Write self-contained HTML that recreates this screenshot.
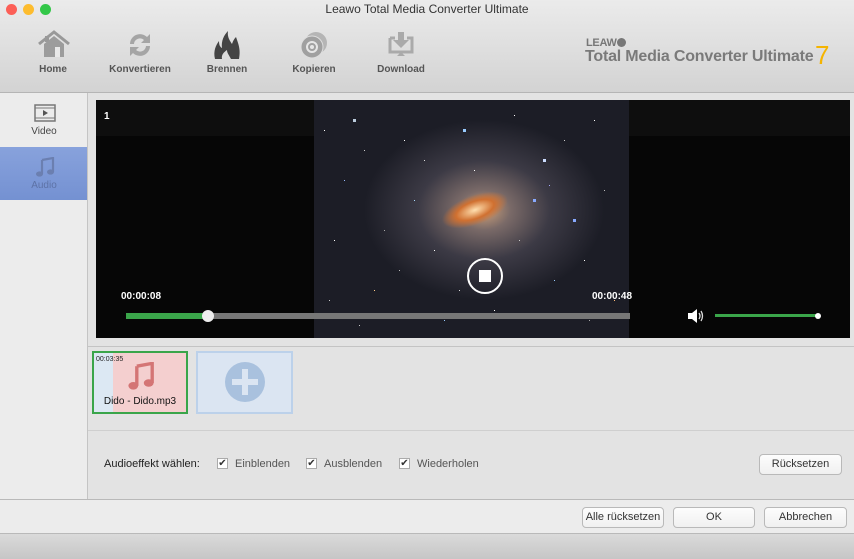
<!DOCTYPE html>
<html><head><meta charset="utf-8"><style>
*{margin:0;padding:0;box-sizing:border-box}
body{width:854px;height:559px;overflow:hidden;font-family:"Liberation Sans",Arial,sans-serif;background:#e3e3e3;position:relative}
.abs{position:absolute}
.top{left:0;top:0;width:854px;height:93px;background:linear-gradient(#ebebeb,#d3d3d3);border-bottom:1px solid #b5b5b5}
.dot{top:4px;width:11px;height:11px;border-radius:50%}
.tb{top:64px;font-size:10px;font-weight:bold;color:#555;text-align:center;width:90px}
.side{left:0;top:93px;width:88px;height:407px;background:#ececec;border-right:1px solid #c4c4c4}
.btn{background:linear-gradient(#fdfdfd,#f0f0f0);border:1px solid #b9b9b9;border-radius:4px;font-size:11px;color:#333;text-align:center;line-height:19px;height:21px}
.cb{width:11px;height:11px;background:#fff;border:1px solid #aaa;top:458px;font-size:10px;line-height:9px;text-align:center;color:#333}
.cl{top:458px;font-size:11px;color:#555}
</style></head><body>
<div class="abs top"></div>
<div class="abs dot" style="left:6px;background:#fc5f57"></div>
<div class="abs dot" style="left:23px;background:#fdbc2e"></div>
<div class="abs dot" style="left:40px;background:#33c748"></div>
<div class="abs" style="left:0;width:854px;top:2px;text-align:center;font-size:12px;color:#333">Leawo Total Media Converter Ultimate</div>
<svg class="abs" style="left:36px;top:30px" width="36" height="30" viewBox="0 0 36 30"><path d="M3 14 L18 2 L33 14" stroke="#999" stroke-width="3" fill="none"/><rect x="9" y="6" width="4" height="6" fill="#999"/><path d="M8 14 L18 6 L28 14 V27 H8Z" fill="#9c9c9c"/><rect x="19" y="17" width="5" height="10" fill="#e8e8e8"/></svg>
<svg class="abs" style="left:125px;top:30px" width="30" height="30" viewBox="0 0 30 30"><path d="M5 14 A10 10 0 0 1 22 7 L25 4 L25 13 L16 13 L19 10 A6 6 0 0 0 9 14Z" fill="#a5a5a5"/><path d="M25 16 A10 10 0 0 1 8 23 L5 26 L5 17 L14 17 L11 20 A6 6 0 0 0 21 16Z" fill="#a5a5a5"/></svg>
<svg class="abs" style="left:212px;top:29px" width="30" height="32" viewBox="0 0 30 32"><path d="M3 30 C1 22 4 16 7 12 C7 16 8 18 10 19 C9 12 12 6 16 2 C15 8 18 12 20 15 C21 12 22 10 24 8 C26 14 29 20 27 30Z" fill="#444"/><path d="M10 30 C9 26 12 23 15 21 C15 24 17 26 19 30Z" fill="#ddd"/></svg>
<svg class="abs" style="left:299px;top:30px" width="30" height="30" viewBox="0 0 30 30"><circle cx="17" cy="13" r="11" fill="#b5b5b5"/><circle cx="13" cy="17" r="11" fill="#a0a0a0" stroke="#ddd" stroke-width="1"/><circle cx="13" cy="17" r="5" fill="none" stroke="#e6e6e6" stroke-width="2"/><circle cx="13" cy="17" r="2" fill="#e6e6e6"/></svg>
<svg class="abs" style="left:386px;top:30px" width="30" height="30" viewBox="0 0 30 30"><path d="M4 8 H9 M21 8 H26 V22 H4 V8" stroke="#aaa" stroke-width="3" fill="none"/><path d="M12 2 H18 V10 H23 L15 18 L7 10 H12Z" fill="#aaa"/><path d="M11 26 H19 L15 22Z" fill="#aaa"/></svg>
<div class="abs tb" style="left:8px">Home</div>
<div class="abs tb" style="left:95px">Konvertieren</div>
<div class="abs tb" style="left:182px">Brennen</div>
<div class="abs tb" style="left:269px">Kopieren</div>
<div class="abs tb" style="left:356px">Download</div>
<div class="abs" style="left:586px;top:37px;font-size:11px;font-weight:bold;color:#777;letter-spacing:-.3px">LEAW<span style="display:inline-block;width:9px;height:9px;border-radius:50%;background:#777;vertical-align:-1px"></span></div>
<div class="abs" style="left:585px;top:48px;font-size:16px;font-weight:bold;color:#7a7a7a;letter-spacing:-.2px">Total Media Converter Ultimate</div>
<div class="abs" style="left:815px;top:40px;font-size:26px;color:#f5b400;font-weight:300">7</div>
<div class="abs side"></div>
<svg class="abs" style="left:34px;top:104px" width="22" height="18" viewBox="0 0 22 18"><rect x="1" y="1" width="20" height="16" fill="none" stroke="#777" stroke-width="1.5"/><path d="M1 4 H21 M1 14 H21" stroke="#777"/><path d="M9 6 L14 9 L9 12Z" fill="#555"/></svg>
<div class="abs" style="left:0;width:88px;top:126px;text-align:center;font-size:10px;color:#444">Video</div>
<div class="abs" style="left:0;top:147px;width:87px;height:53px;background:linear-gradient(#88a2dc,#7491d2)"></div>
<svg class="abs" style="left:35px;top:157px" width="20" height="20" viewBox="0 0 20 20"><path d="M7 3 L18 1 V15" stroke="#6b7fb0" stroke-width="2.2" fill="none"/><path d="M7 3 V17" stroke="#6b7fb0" stroke-width="2.2"/><ellipse cx="4.5" cy="17" rx="3.5" ry="2.6" fill="#6b7fb0"/><ellipse cx="15.5" cy="15" rx="3.5" ry="2.6" fill="#6b7fb0"/></svg>
<div class="abs" style="left:0;width:88px;top:180px;text-align:center;font-size:10px;color:#5d72a6">Audio</div>
<div class="abs" style="left:96px;top:100px;width:754px;height:238px;background:#060606"></div>
<div class="abs" style="left:96px;top:100px;width:754px;height:36px;background:#0e0e0e"></div>
<div class="abs" style="left:314px;top:100px;width:315px;height:238px;background:radial-gradient(ellipse 120px 90px at 170px 110px,#d0a27a 0%,#7a6a68 22%,#3c3a45 55%,#1c1d26 100%)"></div>
<div class="abs" style="left:440px;top:195px;width:70px;height:30px;background:radial-gradient(ellipse at center,#ffe0b0 0%,#d07030 40%,transparent 70%);transform:rotate(-20deg)"></div>
<div class="abs" style="left:314px;top:100px;width:1px;height:1px;box-shadow:40px 20px 0 1px #bcd,90px 40px #fff,150px 30px 0 1px #9cf,230px 60px 0 1px #cdf,200px 15px #fff,30px 80px #9bf,260px 120px 0 1px #8af,280px 20px #fff,120px 150px #fff,60px 190px #fc8,240px 180px #9cf,180px 210px #fff,20px 140px #fff,300px 200px #fb7,100px 100px #adf,220px 100px 0 1px #8af,160px 70px #fff,10px 30px #fff,270px 160px #fff,130px 220px #9cf,50px 50px #ccc,70px 130px #aaa,110px 60px #ddd,250px 40px #ccc,290px 90px #bbb,15px 200px #ccc,85px 170px #bbb,205px 140px #ccc,275px 220px #aaa,45px 225px #ccc,145px 190px #ddd,235px 85px #aaf"></div>
<div class="abs" style="left:104px;top:111px;font-size:10px;font-weight:bold;color:#fff">1</div>
<div class="abs" style="left:467px;top:258px;width:36px;height:36px;border:2px solid #fff;border-radius:50%"></div>
<div class="abs" style="left:479px;top:270px;width:12px;height:12px;background:#fff"></div>
<div class="abs" style="left:121px;top:291px;font-size:10px;font-weight:bold;color:#fff">00:00:08</div>
<div class="abs" style="left:592px;top:291px;font-size:10px;font-weight:bold;color:#fff">00:00:48</div>
<div class="abs" style="left:126px;top:313px;width:504px;height:6px;background:#777"></div>
<div class="abs" style="left:126px;top:313px;width:82px;height:6px;background:#3aa54a"></div>
<div class="abs" style="left:202px;top:310px;width:12px;height:12px;border-radius:50%;background:#eee"></div>
<svg class="abs" style="left:687px;top:308px" width="18" height="16" viewBox="0 0 18 16"><path d="M1 5 H5 L10 1 V15 L5 11 H1Z" fill="#fff"/><path d="M12 5 Q14 8 12 11 M14 3 Q17 8 14 13" stroke="#ddd" stroke-width="1.3" fill="none"/></svg>
<div class="abs" style="left:715px;top:314px;width:104px;height:3px;background:#3aa54a"></div>
<div class="abs" style="left:815px;top:313px;width:6px;height:6px;border-radius:50%;background:#fff"></div>
<div class="abs" style="left:88px;top:346px;width:766px;height:1px;background:#c4c4c4"></div>
<div class="abs" style="left:92px;top:351px;width:96px;height:63px;border:2px solid #3aa54a;background:#f4cfcf"></div>
<div class="abs" style="left:94px;top:353px;width:19px;height:59px;background:#dce8f3"></div>
<div class="abs" style="left:96px;top:356px;font-size:7px;color:#222">00:03:35</div>
<svg class="abs" style="left:127px;top:362px" width="28" height="28" viewBox="0 0 20 20"><path d="M7 3 L18 1 V15" stroke="#d47575" stroke-width="2.4" fill="none"/><path d="M7 3 V17" stroke="#d47575" stroke-width="2.4"/><ellipse cx="4.5" cy="17" rx="3.5" ry="2.7" fill="#d47575"/><ellipse cx="15.5" cy="15" rx="3.5" ry="2.7" fill="#d47575"/></svg>
<div class="abs" style="left:92px;width:96px;top:396px;text-align:center;font-size:10px;color:#111">Dido - Dido.mp3</div>
<div class="abs" style="left:196px;top:351px;width:97px;height:63px;border:2px solid #bcd1ea;background:#dbe5f2"></div>
<div class="abs" style="left:225px;top:362px;width:40px;height:40px;border-radius:50%;background:#a9c1de"></div>
<div class="abs" style="left:242px;top:369px;width:6px;height:26px;background:#dbe5f2"></div>
<div class="abs" style="left:232px;top:379px;width:26px;height:6px;background:#dbe5f2"></div>
<div class="abs" style="left:88px;top:430px;width:766px;height:1px;background:#cfcfcf"></div>
<div class="abs" style="left:104px;top:458px;font-size:11px;color:#222">Audioeffekt wählen:</div>
<div class="abs cb" style="left:217px">✔</div><div class="abs cl" style="left:235px">Einblenden</div>
<div class="abs cb" style="left:306px">✔</div><div class="abs cl" style="left:324px">Ausblenden</div>
<div class="abs cb" style="left:399px">✔</div><div class="abs cl" style="left:417px">Wiederholen</div>
<div class="abs btn" style="left:759px;top:454px;width:83px">Rücksetzen</div>
<div class="abs" style="left:0;top:499px;width:854px;height:35px;background:#ececec;border-top:1px solid #b9b9b9;border-bottom:1px solid #b9b9b9"></div>
<div class="abs btn" style="left:582px;top:507px;width:82px">Alle rücksetzen</div>
<div class="abs btn" style="left:673px;top:507px;width:82px">OK</div>
<div class="abs btn" style="left:764px;top:507px;width:83px">Abbrechen</div>
<div class="abs" style="left:0;top:534px;width:854px;height:25px;background:linear-gradient(#dadada,#c6c6c6)"></div>
</body></html>
